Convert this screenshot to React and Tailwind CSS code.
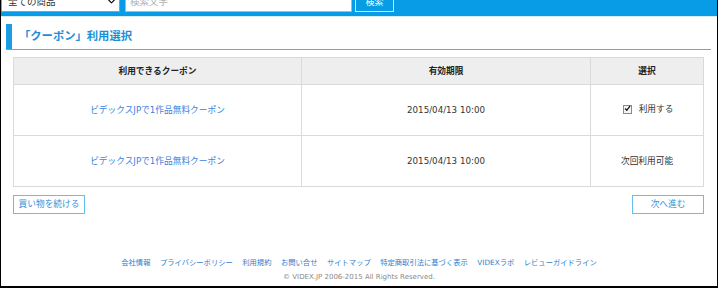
import { ChevronDown } from 'lucide-react';

const font = "font-['DejaVu_Sans','Noto_Sans_CJK_JP',sans-serif]";

const footerLinks = [
  '会社情報',
  'プライバシーポリシー',
  '利用規約',
  'お問い合せ',
  'サイトマップ',
  '特定商取引法に基づく表示',
  'VIDEXラボ',
  'レビューガイドライン',
];

const coupons = [
  { name: 'ビデックスJPで1作品無料クーポン', until: '2015/04/13 10:00', usable: true },
  { name: 'ビデックスJPで1作品無料クーポン', until: '2015/04/13 10:00', usable: false },
];

function CheckBox() {
  return (
    <span className="inline-flex h-[9px] w-[9px] items-center justify-center border border-[#8a8a8a] bg-[#f4f4f4]">
      <svg width="9" height="9" viewBox="0 0 9 9" className="-mt-[1px]">
        <path d="M1.5 4.5 L3.6 6.8 L7.8 1.2" fill="none" stroke="#111" strokeWidth="1.6" />
      </svg>
    </span>
  );
}

export default function App() {
  return (
    <div className={`h-[288px] w-[718px] bg-black pl-[1px] ${font}`}>
      <div className="flex h-[286px] w-[716px] flex-col bg-white">
        {/* Search bar */}
        <div className="flex h-[17px] shrink-0 items-end gap-[5px] overflow-hidden border-b border-[#d6eefa] bg-[#079ce5] pb-[4px]">
          <div className="relative flex h-[20px] w-[119px] shrink-0 items-center border border-[#9a9a9a] bg-white pl-[6px] text-[9.5px] leading-none text-[#333]">
            全ての商品
            <ChevronDown size={11} strokeWidth={2.5} className="absolute right-[2px] top-[3px] text-black" />
          </div>
          <div className="flex h-[20px] w-[227px] shrink-0 items-center border border-[#b5b5b5] bg-white pl-[4px] text-[9.5px] leading-none text-[#b0b0b0]">
            検索文字
          </div>
          <div className="-ml-[2px] flex h-[19px] w-[39px] shrink-0 items-center justify-center border border-[#cde9f8] text-[9px] leading-none text-white">
            検索
          </div>
        </div>

        {/* Title */}
        <div className="ml-[5px] mr-[6px] mt-[7px] flex h-[26px] border-b border-[#42b5ec]">
          <div className="w-[6px] bg-[#1a9de3]" />
          <h1 className="flex items-center pl-[7px] text-[11.3px] font-bold leading-none text-[#1b8fd6]">
            「クーポン」利用選択
          </h1>
        </div>

        {/* Coupon table */}
        <div className="ml-[12px] mt-[7px] w-[691px]">
          <table className="w-full border-collapse text-[8.7px] leading-none text-[#333]">
            <thead>
              <tr className="h-[27px] bg-[#eeeeee]">
                <th className="w-[288px] border border-[#dadada] font-bold text-[#222]">利用できるクーポン</th>
                <th className="w-[289px] border border-[#dadada] font-bold text-[#222]">有効期限</th>
                <th className="border border-[#dadada] font-bold text-[#222]">選択</th>
              </tr>
            </thead>
            <tbody>
              {coupons.map((c, i) => (
                <tr key={i} className="h-[51px]">
                  <td className="border border-[#dadada] text-center text-[#3c7fe0]">{c.name}</td>
                  <td className="border border-[#dadada] text-center">{c.until}</td>
                  <td className="border border-[#dadada] text-center">
                    {c.usable ? (
                      <span className="inline-flex items-center gap-[7px] pl-[2px]">
                        <CheckBox />
                        利用する
                      </span>
                    ) : (
                      '次回利用可能'
                    )}
                  </td>
                </tr>
              ))}
            </tbody>
          </table>
        </div>

        {/* Buttons */}
        <div className="ml-[12px] mt-[8px] flex w-[691px] justify-between">
          <button className="flex h-[19px] w-[72px] items-center justify-center border border-[#63bff0] bg-white text-[8.7px] leading-none text-[#3e8fd8]">
            買い物を続ける
          </button>
          <button className="flex h-[19px] w-[72px] items-center justify-center border border-[#63bff0] bg-white text-[8.7px] leading-none text-[#3e8fd8]">
            次へ進む
          </button>
        </div>

        {/* Footer */}
        <div className="mt-auto pb-[5px]">
          <ul className="flex justify-center gap-[9.5px] text-[7.3px] leading-none text-[#2f7dcc]">
            {footerLinks.map(l => (
              <li key={l}>{l}</li>
            ))}
          </ul>
          <p className="mt-[8px] text-center text-[7px] leading-none text-[#8a8a8a]">
            © VIDEX.JP 2006-2015 All Rights Reserved.
          </p>
        </div>
      </div>
    </div>
  );
}
